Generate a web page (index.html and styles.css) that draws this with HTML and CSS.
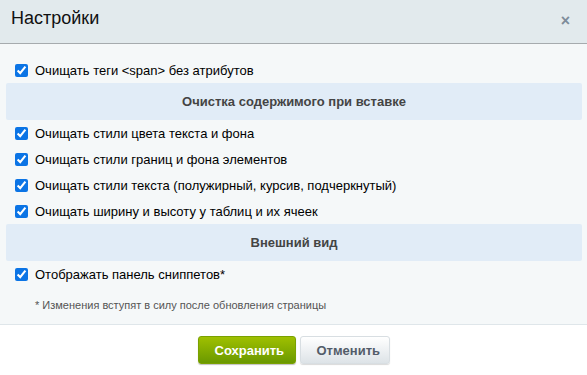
FILE: index.html
```html
<!DOCTYPE html>
<html lang="ru">
<head>
    <meta charset="UTF-8">
    <meta name="viewport" content="width=device-width, initial-scale=1.0">
    <title>Настройки</title>
    <link rel="stylesheet" href="styles.css">
</head>
<body>
    <div class="dialog">
        <div class="dialog-head">
            <span class="dialog-title">Настройки</span>
            <span class="dialog-close">&times;</span>
        </div>

        <div class="dialog-body">
            <label class="row"><input type="checkbox" checked> Очищать теги &lt;span&gt; без атрибутов</label>

            <div class="group-title">Очистка содержимого при вставке</div>
            <label class="row"><input type="checkbox" checked> Очищать стили цвета текста и фона</label>
            <label class="row"><input type="checkbox" checked> Очищать стили границ и фона элементов</label>
            <label class="row"><input type="checkbox" checked> Очищать стили текста (полужирный, курсив, подчеркнутый)</label>
            <label class="row"><input type="checkbox" checked> Очищать ширину и высоту у таблиц и их ячеек</label>

            <div class="group-title">Внешний вид</div>
            <label class="row"><input type="checkbox" checked> Отображать панель сниппетов*</label>

            <div class="note">* Изменения вступят в силу после обновления страницы</div>
        </div>

        <div class="dialog-foot">
            <button class="btn btn-save">Сохранить</button>
            <button class="btn btn-cancel">Отменить</button>
        </div>
    </div>
</body>
</html>
```

FILE: styles.css
```css
html, body {
    margin: 0;
    padding: 0;
}
body {
    font-family: "Liberation Sans", Arial, sans-serif;
    font-size: 13px;
    color: #000;
    background: #fff;
}
.dialog {
    width: 587px;
    height: 375px;
    display: flex;
    flex-direction: column;
}
.dialog-head {
    height: 43px;
    background: #e2eaed;
    border-bottom: 1px solid #a6abae;
    display: flex;
    align-items: center;
    justify-content: space-between;
    padding: 0 17px 0 11px;
}
.dialog-title {
    font-size: 18px;
    color: #111;
    margin-top: -6px;
}
.dialog-close {
    font-size: 16px;
    color: #7e8c9a;
    font-weight: bold;
    margin-top: -2px;
}
.dialog-body {
    flex: 1;
    background: #f5f8f9;
    border-bottom: 1px solid #dfe6ea;
    padding: 13px 5px 0 6px;
}
.row {
    display: flex;
    align-items: center;
    height: 26px;
    padding-left: 9px;
}
.row input {
    width: 13px;
    height: 13px;
    margin: 0 7px 0 0;
    accent-color: #0b74e5;
}
.group-title {
    height: 37px;
    line-height: 37px;
    background: #e1ecf7;
    border-radius: 2px;
    text-align: center;
    font-weight: bold;
    color: #444;
}
.group-title + .row + .note {
    padding-top: 12px;
}
.note {
    font-size: 11px;
    color: #545454;
    padding: 14px 0 0 29px;
}
.dialog-foot {
    height: 50px;
    display: flex;
    justify-content: center;
    align-items: center;
    gap: 4px;
}
.btn {
    height: 28px;
    border-radius: 3px;
    font-family: "Liberation Sans", Arial, sans-serif;
    font-size: 13px;
    font-weight: bold;
    cursor: pointer;
    padding: 0 16px;
}
.btn-save {
    width: 98px;
    color: #fff;
    border: 1px solid #7aa100;
    background: linear-gradient(#9fc000, #6a9900);
    box-shadow: 0 1px 1px rgba(0,0,0,0.25);
}
.btn-cancel {
    width: 90px;
    color: #535c69;
    border: 1px solid #d8dee2;
    background: linear-gradient(#ffffff, #dde3e7);
    box-shadow: 0 1px 1px rgba(0,0,0,0.15);
}
```
